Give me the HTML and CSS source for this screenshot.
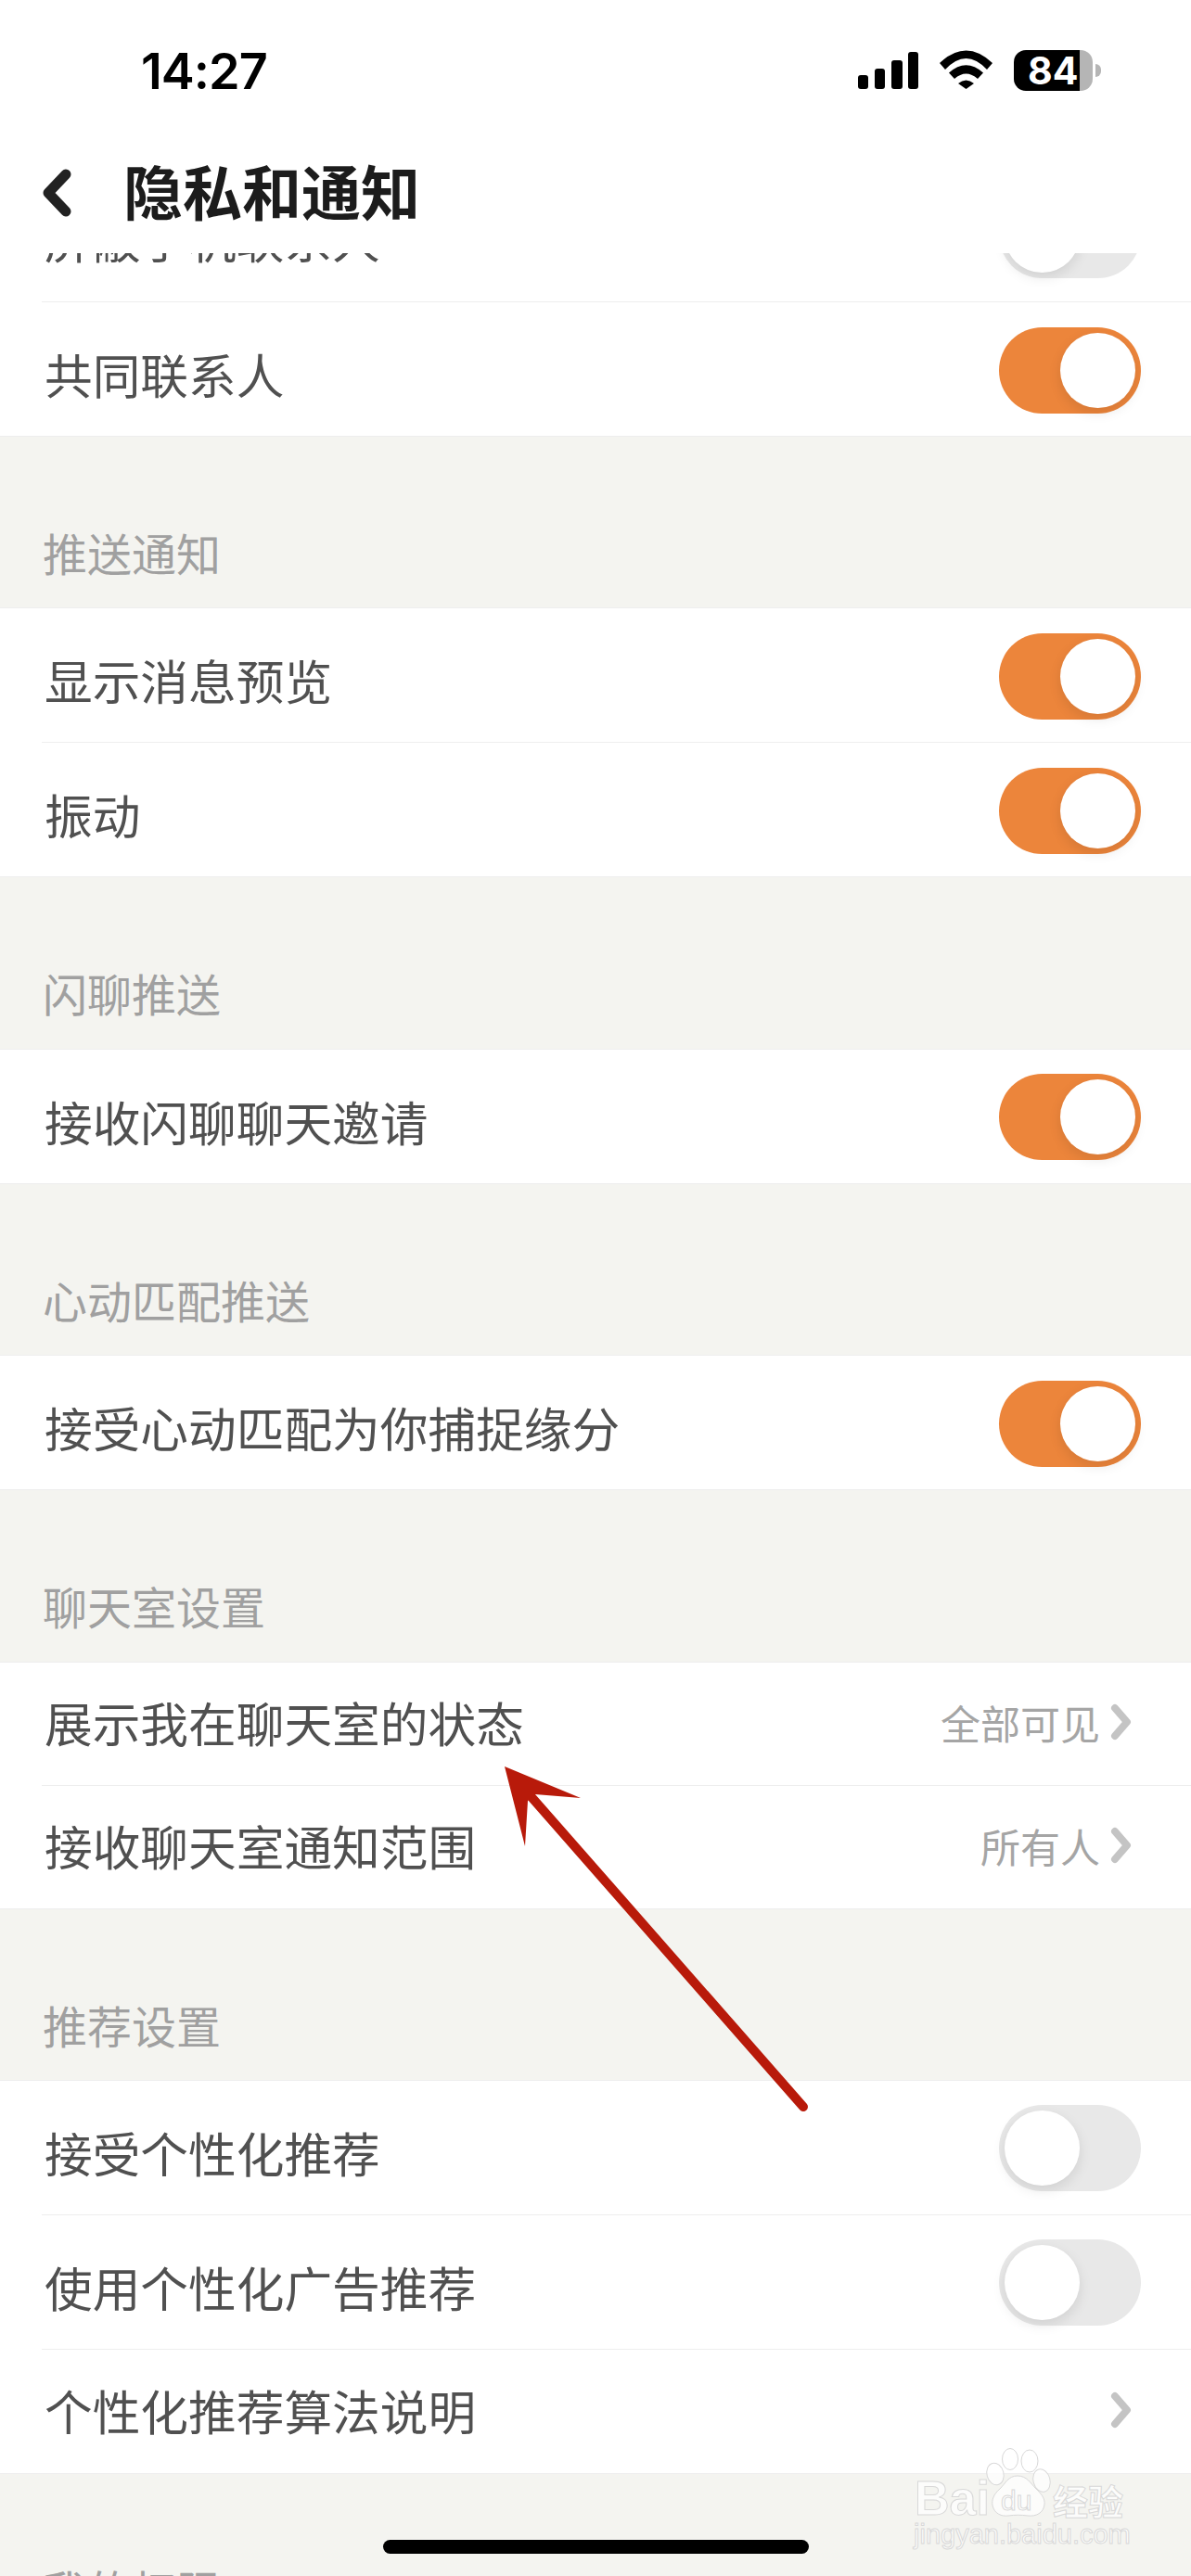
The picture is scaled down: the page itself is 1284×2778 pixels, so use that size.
FILE: index.html
```html
<!DOCTYPE html>
<html lang="zh-CN">

<head>
    <meta charset="UTF-8" />
    <meta name="viewport" content="width=device-width, initial-scale=1.0" />
    <title>隐私和通知</title>
    <link rel="stylesheet" href="styles.css">
</head>

<body>
    <div class="page">
        <header class="topbar">
            <div class="status">
                <span class="time">14:27</span>
                <div class="status-icons">
                    <svg class="signal" width="65" height="40" viewBox="0 0 65 40">
                        <rect x="0" y="25" width="11" height="15" rx="3" />
                        <rect x="18" y="18" width="11" height="22" rx="3" />
                        <rect x="36" y="9" width="12" height="31" rx="3" />
                        <rect x="54" y="0" width="11" height="40" rx="3" />
                    </svg>
                    <svg class="wifi" width="57" height="42" viewBox="0 0 57 42">
                        <path d="M0 14Q28.5 -13 57 14L51 21Q28.5 -3 6 21Z" />
                        <path d="M10 24.5Q28.5 8 47 24.5L41 31Q28.5 20 16 31Z" />
                        <path d="M20 36Q28.5 29 37 36L28.5 42Z" />
                    </svg>
                    <div class="battery">84</div>
                </div>
            </div>
            <div class="nav">
                <svg class="back" width="31" height="52" viewBox="0 0 31 52">
                    <path d="M25 6L6 26L25 46" />
                </svg>
                <h1>隐私和通知</h1>
            </div>
        </header>

        <main>
            <section class="list">
                <div class="row row-cut">
                    <div class="row-inner">
                        <span class="label">屏蔽手机联系人</span>
                        <div class="switch off"><i class="knob"></i></div>
                    </div>
                </div>
                <div class="row">
                    <span class="label">共同联系人</span>
                    <div class="switch on"><i class="knob"></i></div>
                </div>
            </section>

            <h2 class="head">推送通知</h2>
            <section class="list">
                <div class="row">
                    <span class="label">显示消息预览</span>
                    <div class="switch on"><i class="knob"></i></div>
                </div>
                <div class="row">
                    <span class="label">振动</span>
                    <div class="switch on"><i class="knob"></i></div>
                </div>
            </section>

            <h2 class="head">闪聊推送</h2>
            <section class="list">
                <div class="row">
                    <span class="label">接收闪聊聊天邀请</span>
                    <div class="switch on"><i class="knob"></i></div>
                </div>
            </section>

            <h2 class="head">心动匹配推送</h2>
            <section class="list">
                <div class="row">
                    <span class="label">接受心动匹配为你捕捉缘分</span>
                    <div class="switch on"><i class="knob"></i></div>
                </div>
            </section>

            <h2 class="head">聊天室设置</h2>
            <section class="list">
                <div class="row row-link">
                    <span class="label">展示我在聊天室的状态</span>
                    <div class="more">
                        <span class="value">全部可见</span>
                        <svg class="chevron" width="33" height="40" viewBox="0 0 33 40"><path d="M5 5L18 20L5 35" /></svg>
                    </div>
                </div>
                <div class="row row-link">
                    <span class="label">接收聊天室通知范围</span>
                    <div class="more">
                        <span class="value">所有人</span>
                        <svg class="chevron" width="33" height="40" viewBox="0 0 33 40"><path d="M5 5L18 20L5 35" /></svg>
                    </div>
                </div>
            </section>

            <h2 class="head">推荐设置</h2>
            <section class="list">
                <div class="row">
                    <span class="label">接受个性化推荐</span>
                    <div class="switch off"><i class="knob"></i></div>
                </div>
                <div class="row">
                    <span class="label">使用个性化广告推荐</span>
                    <div class="switch off"><i class="knob"></i></div>
                </div>
                <div class="row row-link row-last">
                    <span class="label">个性化推荐算法说明</span>
                    <div class="more">
                        <svg class="chevron" width="33" height="40" viewBox="0 0 33 40"><path d="M5 5L18 20L5 35" /></svg>
                    </div>
                </div>
            </section>

            <h2 class="head">我的权限</h2>
        </main>

        <!-- 红色箭头标注 -->
        <svg class="arrow" width="350" height="390" viewBox="530 1895 350 390">
            <path class="arrow-line" d="M573 1938L866 2272" />
            <path class="arrow-head" d="M544 1905L626 1939L577 1935L569 1942L566 1991Z" />
        </svg>

        <!-- 水印 -->
        <svg class="watermark" width="270" height="168" viewBox="0 0 270 168">
            <ellipse cx="113" cy="58" rx="9" ry="12" transform="rotate(-15 113 58)" />
            <ellipse cx="129" cy="42" rx="8.5" ry="11.5" />
            <ellipse cx="150" cy="44" rx="9" ry="12" />
            <ellipse cx="163" cy="65" rx="9" ry="12.5" transform="rotate(-15 163 65)" />
            <path d="M137 60C127 60 124 68 118 74C111 80 109 86 110 92C112 101 120 104 127 103C134 102 141 102 148 103C157 104 165 100 166 91C167 84 162 79 157 74C151 68 147 60 137 60Z" />
            <text class="wm-du" x="119" y="97">du</text>
            <text class="wm-bai" x="26" y="102">Bai</text>
            <text class="wm-cn" x="175" y="102">经验</text>
            <text class="wm-url" x="25" y="133">jingyan.baidu.com</text>
        </svg>

        <div class="home-bar"></div>
    </div>
</body>

</html>
```

FILE: styles.css
```css
* {
    box-sizing: border-box;
}

html,
body {
    margin: 0;
    padding: 0;
}

body {
    font-family: "Noto Sans CJK SC", "Noto Sans", sans-serif;
    background-color: #f4f4f0;
}

.page {
    position: relative;
    width: 1284px;
    height: 2778px;
    overflow: hidden;
    background-color: #f4f4f0;
}

/* 顶部 */
.topbar {
    height: 273px;
    background-color: #fff;
}

.status {
    display: flex;
    justify-content: space-between;
    align-items: center;
    height: 152px;
    padding: 0 106px 0 152px;
}

.time {
    font-family: Inter, "Liberation Sans", sans-serif;
    font-size: 54px;
    font-weight: 600;
    letter-spacing: -1px;
    color: #000;
}

.status-icons {
    display: flex;
    align-items: flex-end;
    gap: 23px;
}

.signal,
.wifi {
    display: block;
    margin-bottom: 2px;
    fill: #000;
}

.battery {
    position: relative;
    width: 85px;
    height: 44px;
    padding-left: 15px;
    border-radius: 13px;
    background: linear-gradient(to right, #000 71px, #b5b5b5 71px);
    font-family: Inter, "Liberation Sans", sans-serif;
    font-size: 41px;
    font-weight: 700;
    line-height: 44px;
    color: #fff;
}

.battery::after {
    content: "";
    position: absolute;
    top: 15px;
    right: -9px;
    width: 6px;
    height: 14px;
    border-radius: 0 7px 7px 0;
    background-color: #b5b5b5;
}

.nav {
    display: flex;
    align-items: center;
    gap: 56px;
    height: 112px;
    padding-left: 46px;
}

.back {
    display: block;
    fill: none;
    stroke: #222;
    stroke-width: 11;
    stroke-linecap: round;
    stroke-linejoin: round;
}

h1 {
    margin: 0 0 9px;
    font-size: 64px;
    font-weight: 700;
    line-height: 80px;
    color: #1c1c1c;
}

/* 列表 */
.list {
    background-color: #fff;
}

.head {
    height: 185.4px;
    margin: 0;
    padding: 92px 0 0 46px;
    border-bottom: 1px solid #eeeeee;
    font-size: 48px;
    font-weight: 400;
    line-height: 64px;
    color: #a0a0a0;
}

.row {
    display: flex;
    justify-content: space-between;
    align-items: center;
    height: 145px;
    margin-left: 45px;
    padding: 2px 54px 0 3px;
    border-bottom: 1px solid #eeeeee;
}

.row:last-child {
    margin-left: 0;
    padding-left: 48px;
}

.row-link {
    height: 133px;
    padding-top: 0;
    padding-bottom: 4px;
}

.row-link.row-last {
    height: 134px;
    padding-bottom: 2px;
}

.row-cut {
    align-items: flex-end;
    height: 53px;
    padding-top: 0;
    overflow: hidden;
}

.row-inner {
    display: flex;
    flex: none;
    justify-content: space-between;
    align-items: center;
    width: 100%;
    height: 144px;
}

.label {
    padding-top: 8px;
    font-size: 51.7px;
    line-height: 68px;
    color: #505050;
}

.row-link .label {
    padding-top: 0;
}

.more {
    display: flex;
    align-items: center;
}

.value {
    margin-right: 11px;
    font-size: 43px;
    line-height: 56px;
    color: #a5a5a5;
}

.chevron {
    display: block;
    fill: none;
    stroke: #c4c4c4;
    stroke-width: 8;
    stroke-linecap: round;
    stroke-linejoin: round;
}

/* 开关 */
.switch {
    display: flex;
    flex: none;
    width: 153px;
    height: 93px;
    padding: 6px;
    border-radius: 47px;
}

.switch.on {
    justify-content: flex-end;
    background-color: #ec853b;
}

.switch.off {
    justify-content: flex-start;
    background-color: #e8e8e8;
}

.knob {
    display: block;
    width: 81px;
    height: 81px;
    border-radius: 50%;
    background-color: #fff;
    box-shadow: 0 5px 14px rgba(0, 0, 0, 0.1);
}

/* 标注层 */
.arrow {
    position: absolute;
    top: 1895px;
    left: 530px;
}

.arrow-line {
    fill: none;
    stroke: #b81a0a;
    stroke-width: 10;
    stroke-linecap: round;
}

.arrow-head {
    fill: #b81a0a;
}

.watermark {
    position: absolute;
    top: 2610px;
    left: 960px;
    fill: rgba(255, 255, 255, 0.75);
    stroke: #d8d8d8;
    stroke-width: 1;
}

.wm-du {
    font-family: "Liberation Sans", sans-serif;
    font-size: 30px;
}

.wm-bai {
    font-family: "Liberation Sans", sans-serif;
    font-size: 52px;
    font-weight: 700;
}

.wm-cn {
    font-family: "Noto Sans CJK SC", sans-serif;
    font-size: 38px;
    font-weight: 700;
}

.wm-url {
    font-family: "Liberation Sans", sans-serif;
    font-size: 29px;
}

.home-bar {
    position: absolute;
    top: 2739px;
    left: 413px;
    width: 459px;
    height: 15px;
    border-radius: 8px;
    background-color: #000;
}
```
